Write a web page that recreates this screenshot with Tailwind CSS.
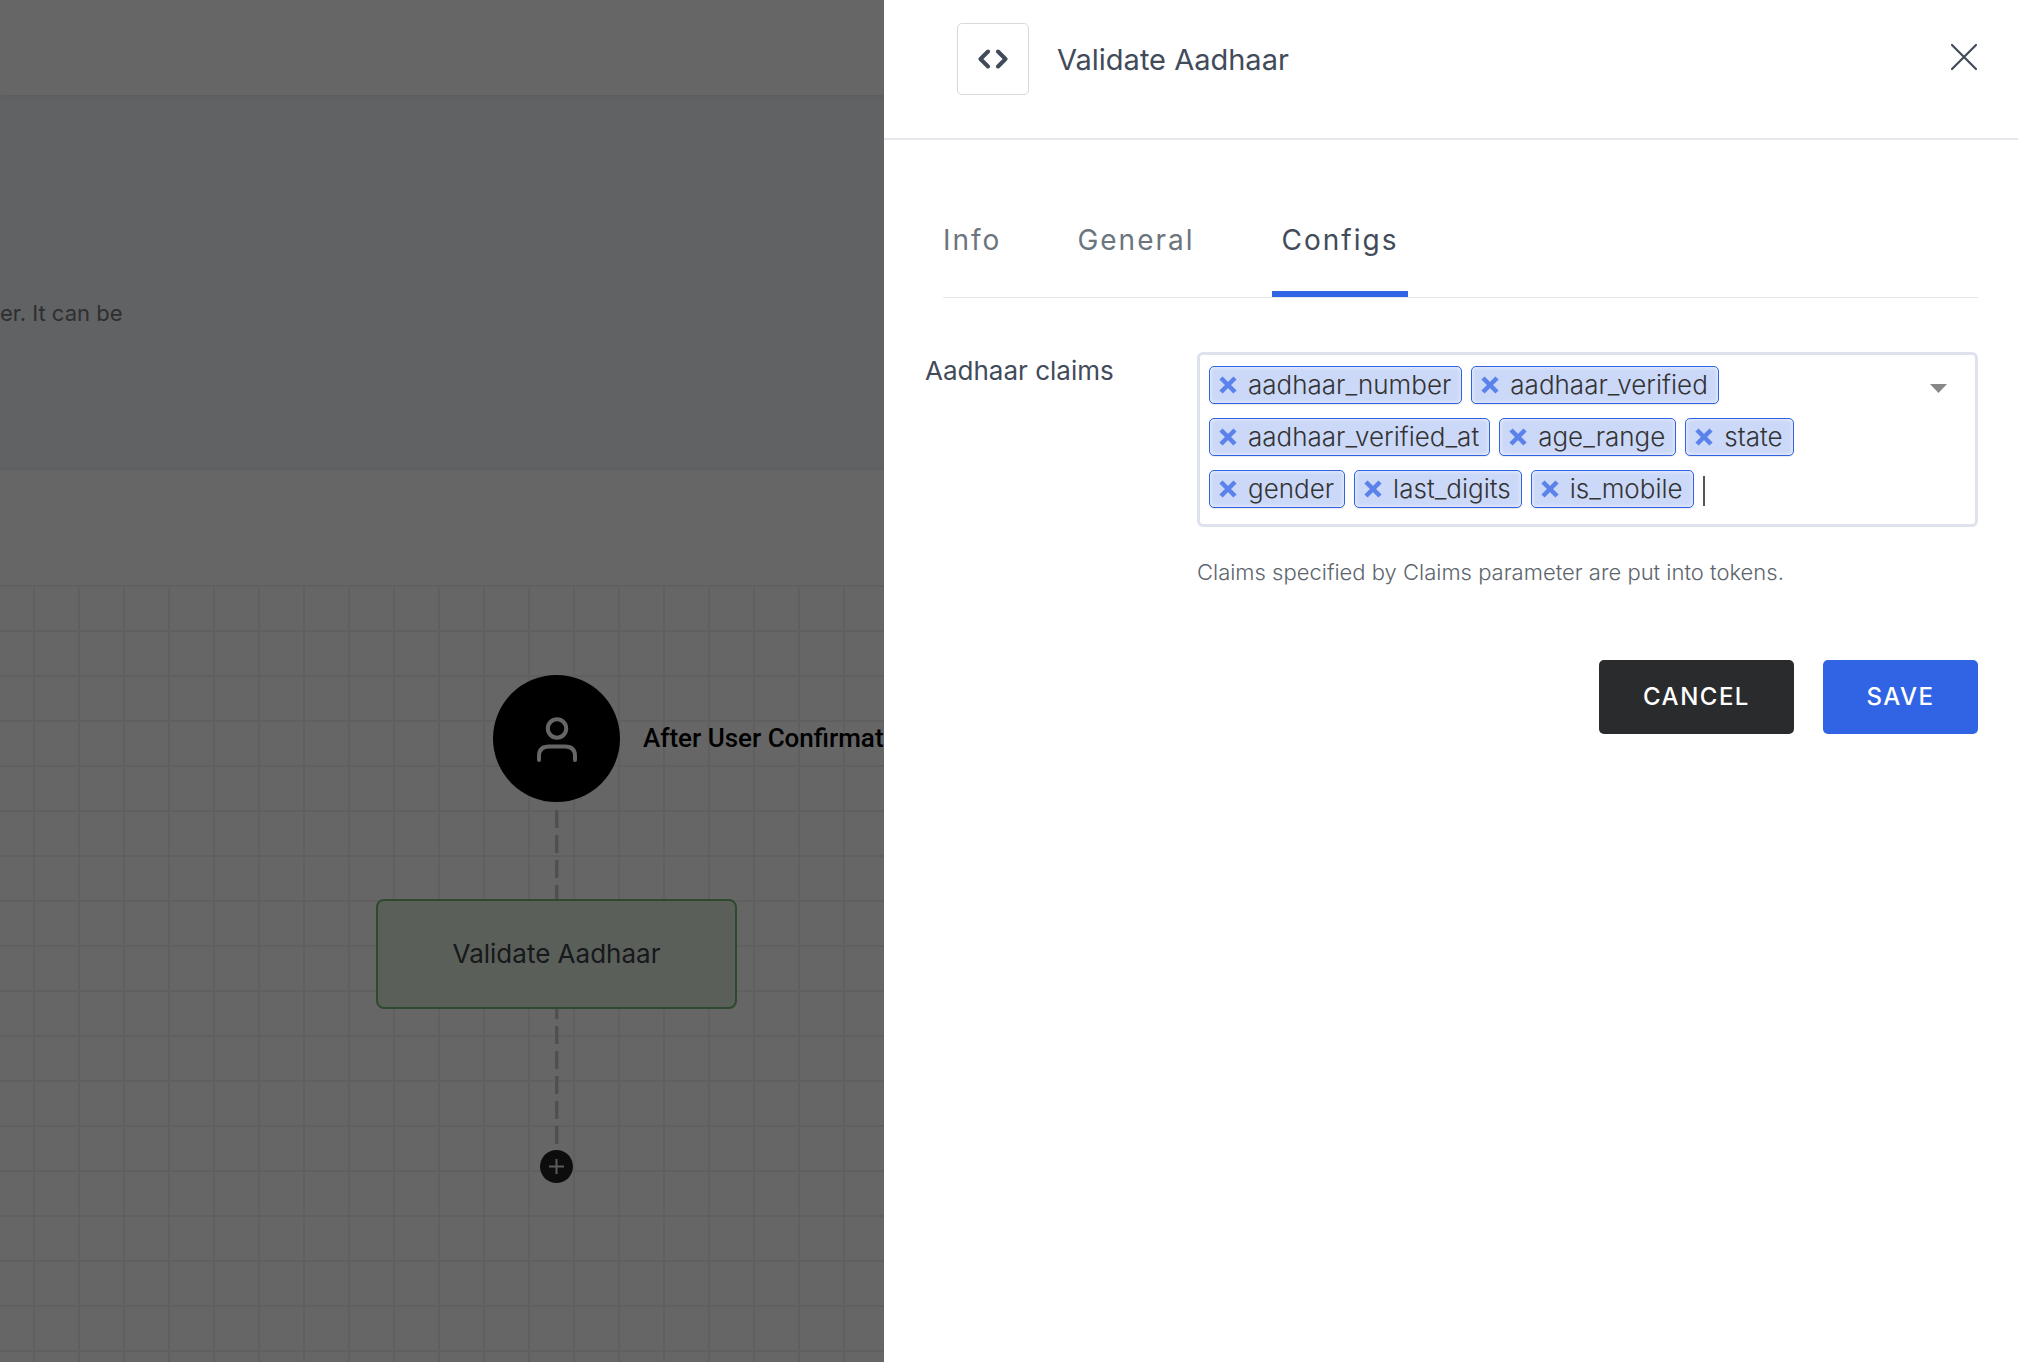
<!DOCTYPE html>
<html lang="en">
<head>
<meta charset="utf-8">
<meta name="viewport" content="width=device-width, initial-scale=1">
<title>Validate Aadhaar</title>
<script src="https://cdn.jsdelivr.net/npm/@tailwindcss/browser@4"></script>
</head>
<body class="h-screen overflow-hidden bg-white font-['Inter',sans-serif]">

<!-- Workflow page -->
<div class="flex h-screen flex-col">
  <header class="relative z-10 h-[95px] shrink-0 bg-white shadow-[0_2px_8px_rgba(0,0,0,0.06)]"></header>
  <section class="h-[375px] shrink-0 border-b-2 border-[#ecf1f8] bg-[#f2f5fa] pt-[202px]">
    <p class="text-[22px] leading-8 text-[#737679]">er. It can be</p>
  </section>
  <div class="h-[115px] shrink-0"></div>
  <main class="relative grow overflow-hidden bg-[linear-gradient(#f0f0f0_2px,transparent_2px),linear-gradient(90deg,#f0f0f0_2px,transparent_2px)] bg-[size:45px_45px] bg-[position:33px_0px]">
    <svg class="absolute left-[555px] top-[216px] h-[98px] w-[4px]" viewBox="0 0 4 98" fill="none" stroke="#c8c8c8" stroke-width="3.5" stroke-dasharray="18 7"><path d="M1.75 9V98"/></svg>
    <svg class="absolute left-[555px] top-[424px] h-[141px] w-[4px]" viewBox="0 0 4 141" fill="none" stroke="#c8c8c8" stroke-width="3.5" stroke-dasharray="18 7" stroke-dashoffset="8"><path d="M1.75 0V136"/></svg>
    <div class="absolute left-[493px] top-[90px] flex items-center gap-[23px]">
      <span class="flex size-[127px] items-center justify-center rounded-full bg-black">
        <svg class="h-[46px] w-[42px]" viewBox="0 0 42 46" fill="none" stroke="#fff" stroke-width="4" stroke-linecap="round"><circle cx="21" cy="12.500" r="9.200"/><path d="M3 44V40Q3 30.500 13 30.500H29Q39 30.500 39 40V44"/></svg>
      </span>
      <span class="whitespace-nowrap font-['Roboto',sans-serif] text-[26px] font-medium text-black">After User Confirmation</span>
    </div>
    <div class="absolute left-[376px] top-[314px] flex h-[110px] w-[361px] items-center justify-center rounded-lg border-2 border-[#73b973] bg-[#e1edde] pb-[2px] text-[26px] text-[#3a4048]">Validate Aadhaar</div>
    <button class="absolute left-[540px] top-[565px] flex size-[33px] items-center justify-center rounded-full bg-[#212121]" aria-label="Add step">
      <svg class="size-[15px]" viewBox="0 0 15 15" stroke="#e4e4e4" stroke-width="2"><path d="M7.500 0V15M0 7.500H15"/></svg>
    </button>
  </main>
</div>

<!-- Settings drawer -->
<div class="fixed inset-0 z-20 flex justify-end bg-black/60">
  <aside class="flex w-[1134px] max-w-full flex-col bg-white text-[#414b5a]">
    <header class="flex h-[140px] items-start border-b-2 border-[#e5e7ed] pl-[73px] pr-10 pt-[23px]">
      <span class="flex size-[72px] items-center justify-center rounded-[5px] border border-[#d9d9d9]">
        <svg class="h-5 w-[30px]" viewBox="0 0 30 20" fill="none" stroke="#414b5a" stroke-width="4" stroke-linecap="round" stroke-linejoin="round"><path d="M10 2.500L2.500 10L10 17.500M20 2.500L27.500 10L20 17.500"/></svg>
      </span>
      <h1 class="ml-7 grow text-[29px] leading-[74px]">Validate Aadhaar</h1>
      <button class="mt-5 flex size-7 items-center justify-center" aria-label="Close">
        <svg class="size-7" viewBox="0 0 28 28" fill="none" stroke="#414b5a" stroke-width="2.200" stroke-linecap="round"><path d="M2 2L26 26M26 2L2 26"/></svg>
      </button>
    </header>

    <nav class="ml-[59px] mr-10 mt-[60px] flex h-[98px] items-stretch border-b border-[#e5e7ea] text-[28px] leading-[80px] tracking-[2px]">
      <a href="#info" class="mr-[58px] text-[#6c757d]">Info</a>
      <a href="#general" class="mr-[59px] px-[18px] text-[#6c757d]">General</a>
      <a href="#configs" class="border-b-6 border-[#3164e4] px-[10px]" aria-current="page">Configs</a>
    </nav>

    <form class="mt-[54px] flex flex-col pl-[41px] pr-10">
      <div class="flex items-start">
        <label for="claims" class="w-[272px] shrink-0 text-[26px] leading-[38px]">Aadhaar claims</label>
        <div class="grow">
          <div class="flex h-[175px] items-start rounded-md border-3 border-[#dde2ec] py-[11px] pl-[9px] pr-[28px]">
            <ul class="flex grow flex-wrap gap-x-[9px] gap-y-[14px] text-[26px] font-light leading-9 text-[#333]" id="chips"></ul>
            <button type="button" class="ml-4 mt-[18px]" aria-label="Show claims">
              <svg class="h-[9px] w-[17px]" viewBox="0 0 17 9"><path d="M0 0H17L8.500 9Z" fill="#888"/></svg>
            </button>
          </div>
          <p class="mt-[29px] text-[22px] font-light leading-8 text-[#5c656d]">Claims specified by Claims parameter are put into tokens.</p>
        </div>
      </div>
      <div class="mt-[72px] flex justify-end gap-[29px] text-[24px] font-medium tracking-[1.500px] text-white">
        <button type="button" class="h-[74px] w-[195px] rounded-[5px] bg-[#2a2b2d]">CANCEL</button>
        <button type="submit" class="h-[74px] w-[155px] rounded-[5px] bg-[#3164e4]">SAVE</button>
      </div>
    </form>
  </aside>
</div>

<script>
  const claims = ['aadhaar_number', 'aadhaar_verified', 'aadhaar_verified_at', 'age_range', 'state', 'gender', 'last_digits', 'is_mobile'];
  const chip = name => `<li class="flex h-[38px] items-center gap-[11px] rounded-[5px] border border-[#3164e4] bg-[#cbd8f8] pl-[9px] pr-[10px] shadow-[inset_0_0_4px_rgba(255,255,255,0.8),0_1px_1px_rgba(0,0,0,0.08)]">
    <button type="button" aria-label="Remove ${name}"><svg class="size-[18px]" viewBox="0 0 18 18" stroke="#5a82ea" stroke-width="4.500"><path d="M2 2L16 16M16 2L2 16"/></svg></button><span>${name}</span></li>`;
  document.getElementById('chips').innerHTML = claims.map(chip).join('') +
    `<li class="flex h-[38px] items-center"><span class="mt-[4px] h-[30px] w-[2px] bg-[#555]"></span><input id="claims" type="text" class="w-10 outline-none"></li>`;
</script>
</body>
</html>
